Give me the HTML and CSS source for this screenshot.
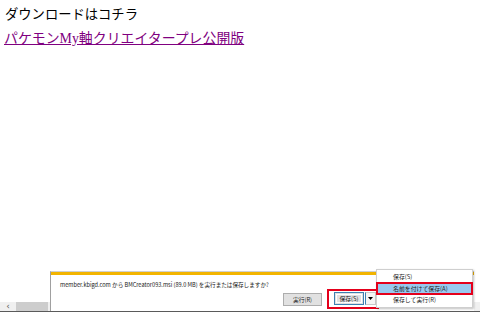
FILE: index.html
```html
<!DOCTYPE html>
<html lang="ja">
<head>
<meta charset="utf-8">
<title>ダウンロード</title>
<link rel="stylesheet" href="styles.css">
</head>
<body>
<div class="page">
  <div class="content">
    <h1 class="title">ダウンロードはコチラ</h1>
    <a class="dl-link" href="#">パケモンMy軸クリエイタープレ公開版</a>
  </div>
  <div class="spacer"></div>
  <div class="hscroll">
    <span class="arrow">&#x2039;</span>
    <span class="thumb"></span>
  </div>
  <div class="bottom-line"></div>
</div>

<div class="notify">
  <div class="notify-stripe"></div>
  <div class="notify-body">
    <p class="notify-text">member.kbigd.com から BMCreator093.msi (89.0 MB) を実行または保存しますか?</p>
    <div class="notify-actions">
      <button class="btn">実行(R)</button>
      <div class="save-group">
        <button class="btn btn-default">保存(S)</button>
        <button class="btn btn-split"><svg width="5" height="3" viewBox="0 0 5 3"><path d="M0 0h5L2.5 3z" fill="#000"/></svg></button>
      </div>
    </div>
  </div>
  <div class="grip"></div>
</div>

<div class="menu">
  <div class="menu-item">保存(S)</div>
  <div class="menu-item menu-item-active">名前を付けて保存(A)</div>
  <div class="menu-item menu-item-last">保存して実行(R)</div>
</div>
</body>
</html>
```

FILE: styles.css
```css
html, body {
  margin: 0;
  padding: 0;
  background: #ffffff;
}
body {
  width: 480px;
  height: 312px;
  overflow: hidden;
  position: relative;
  font-family: "Noto Sans CJK JP", "Noto Sans", sans-serif;
}
.page {
  display: flex;
  flex-direction: column;
  height: 312px;
}
.content {
  display: flex;
  flex-direction: column;
  align-items: flex-start;
  padding: 4px 0 0 4px;
}
.title {
  margin: 0;
  font-size: 13.3px;
  line-height: 20px;
  font-weight: normal;
  color: #000;
  font-family: "Noto Sans CJK JP", sans-serif;
  padding-left: 1px;
}
.dl-link {
  margin-top: 5px;
  font-size: 13.9px;
  line-height: 20px;
  color: #800080;
  font-family: "Liberation Serif", "Noto Sans CJK JP", serif;
  text-decoration: underline;
}
.spacer { flex: 1; }
.hscroll {
  height: 9px;
  background: #f0f0f0;
  display: flex;
  align-items: center;
}
.arrow {
  width: 16px;
  text-align: center;
  font-size: 9px;
  line-height: 9px;
  color: #606060;
  font-family: "DejaVu Sans", sans-serif;
}
.thumb {
  width: 32px;
  height: 9px;
  background: #cdcdcd;
}
.bottom-line {
  height: 1px;
  background: #5a5a5a;
}

.notify {
  position: absolute;
  left: 50px;
  top: 271px;
  width: 424px;
  height: 40px;
  background: #ffffff;
  border-left: 1px solid #a0a0a0;
  border-top: 1px solid #d0d0d0;
  box-sizing: border-box;
}
.notify-stripe {
  height: 3px;
  background: #f2b400;
}
.notify-body {
  display: flex;
  flex-direction: column;
  padding: 6px 0 0 9px;
}
.notify-text {
  margin: 0;
  font-size: 5.6px;
  line-height: 8px;
  color: #1a1a1a;
}
.notify-actions {
  display: flex;
  align-items: center;
  margin-top: 0;
  padding-left: 223px;
  gap: 5px;
}
.btn {
  font-family: "Noto Sans CJK JP", sans-serif;
  font-size: 5.8px;
  line-height: 11px;
  height: 13px;
  padding: 0;
  margin: 0;
  border: 1px solid #adadad;
  background: #e1e1e1;
  color: #222;
  box-sizing: border-box;
  width: 39px;
}
.save-group {
  display: flex;
  align-items: center;
  gap: 1px;
  padding: 1px 1px 2px 5px;
  border: 2px solid #e4001b;
}
.btn-default {
  width: 30px;
  border-color: #3c7fb1;
  box-shadow: inset 0 0 0 1px #e1e1e1, inset 0 0 0 2px #ffffff;
}
.btn-split {
  width: 11px;
  display: flex;
  align-items: center;
  justify-content: center;
  background: #f5f5f5;
  border-color: #c8c8c8;
  border-left-color: #3c7fb1;
}
.grip {
  position: absolute;
  right: 2px;
  bottom: 3px;
  width: 3px;
  height: 3px;
  border-right: 1px solid #707070;
  border-bottom: 1px solid #707070;
}

.menu {
  position: absolute;
  left: 376px;
  top: 269px;
  width: 97px;
  padding: 1px 0 2px;
  background: #ffffff;
  border: 1px solid #cfcfcf;
  box-shadow: 1px 1px 2px rgba(0,0,0,0.25);
  box-sizing: border-box;
  display: flex;
  flex-direction: column;
}
.menu-item {
  font-size: 5.9px;
  line-height: 11px;
  height: 11px;
  padding-left: 16px;
  color: #222;
  box-sizing: border-box;
}
.menu-item-active {
  background: #99c9ef;
  border: 2px solid #e4001b;
  margin: 0 -1px;
  padding-left: 15px;
  height: 13px;
  line-height: 9px;
}
.menu-item-last {
  height: 10px;
  line-height: 10px;
}
```
